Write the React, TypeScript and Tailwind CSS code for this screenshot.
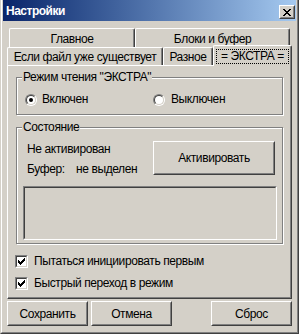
import React from "react";

const px = (pattern: string[]) => {
  const rects: React.ReactElement[] = [];
  pattern.forEach((row, y) =>
    row.split("").forEach((c, x) => {
      if (c === "x") rects.push(<rect key={`${x}-${y}`} x={x} y={y} width={1} height={1} fill="#000" />);
    })
  );
  return rects;
};

const XGlyph = () => (
  <svg width="8" height="7" viewBox="0 0 8 7" shapeRendering="crispEdges">
    {px(["xx....xx", ".xx..xx.", "..xxxx..", "...xx...", "..xxxx..", ".xx..xx.", "xx....xx"])}
  </svg>
);

const Check = () => (
  <svg width="7" height="7" viewBox="0 0 7 7" shapeRendering="crispEdges">
    {px(["......x", ".....xx", "x...xxx", "xx.xxx.", "xxxxx..", ".xxx...", "..x...."])}
  </svg>
);

const Radio = ({ on }: { on?: boolean }) => (
  <div className="w-[12px] h-[12px] rounded-full border border-t-[#808080] border-l-[#808080] border-b-white border-r-white shrink-0">
    <div className="w-full h-full rounded-full border border-t-[#404040] border-l-[#404040] border-b-[#d4d0c8] border-r-[#d4d0c8] bg-white flex items-center justify-center">
      {on && <div className="w-[4px] h-[4px] rounded-full bg-black" />}
    </div>
  </div>
);

const CheckBox = () => (
  <div className="w-[13px] h-[13px] border border-t-[#808080] border-l-[#808080] border-b-white border-r-white shrink-0">
    <div className="w-full h-full border border-t-[#404040] border-l-[#404040] border-b-[#d4d0c8] border-r-[#d4d0c8] bg-white flex items-center justify-center">
      <Check />
    </div>
  </div>
);

const Button = ({ children, className = "" }: { children: React.ReactNode; className?: string }) => (
  <div className={`border border-t-white border-l-white border-b-[#404040] border-r-[#404040] ${className}`}>
    <div className="w-full h-full border border-t-[#d4d0c8] border-l-[#d4d0c8] border-b-[#808080] border-r-[#808080] flex items-center justify-center">
      {children}
    </div>
  </div>
);

const Tab = ({ children, className = "" }: { children: React.ReactNode; className?: string }) => (
  <div
    className={`border-l border-t border-r border-l-white border-t-white border-r-[#404040] rounded-tl-[2px] rounded-tr-[2px] shadow-[inset_-1px_0_0_#808080] flex items-center justify-center bg-[#d4d0c8] ${className}`}
  >
    {children}
  </div>
);

export default function App() {
  return (
    <div className="w-[299px] h-[334px] bg-[#d4d0c8] text-black text-[12px] tracking-[-0.4px] font-['Liberation_Sans',Arial,sans-serif] overflow-hidden">
      <div className="h-full border-l border-r border-b border-l-[#d4d0c8] border-r-[#404040] border-b-[#404040]">
        <div className="h-full border-l border-r border-b border-l-white border-r-[#808080] border-b-[#808080] px-[1px] pb-[1px] flex flex-col">
          {/* Title bar */}
          <div className="h-[21px] shrink-0 bg-gradient-to-r from-[#0a246a] to-[#a6caf0] flex items-start justify-between">
            <div className="mt-[4px] ml-[3px] text-white font-bold text-[12px] tracking-[-0.5px] leading-[15px]">Настройки</div>
            <div className="mt-[5px] mr-[1px] w-[16px] h-[14px] border border-t-white border-l-white border-b-[#404040] border-r-[#404040]">
              <div className="w-full h-full border border-t-[#d4d0c8] border-l-[#d4d0c8] border-b-[#808080] border-r-[#808080] bg-[#d4d0c8] flex items-center justify-center">
                <XGlyph />
              </div>
            </div>
          </div>

          {/* Content */}
          <div className="px-[4px] pt-[7px] flex flex-col">
            {/* Tab row 1 */}
            <div className="flex h-[19px] ml-[2px]">
              <Tab className="w-[126px] h-[20px]">Главное</Tab>
              <Tab className="w-[155px] h-[20px]">Блоки и буфер</Tab>
            </div>
            {/* Tab row 2 */}
            <div className="flex items-end h-[18px] relative z-10">
              <Tab className="w-[156px] h-[18px]">Если файл уже существует</Tab>
              <Tab className="w-[50px] h-[18px]">Разное</Tab>
              <Tab className="w-[79px] h-[21px] mb-[-1px] relative z-20 pt-[1px]">
                <div className="border border-dotted border-black px-[3px] h-[15px] w-[73px] flex items-center justify-center leading-[13px]">= ЭКСТРА =</div>
              </Tab>
            </div>

            {/* Panel */}
            <div className="h-[234px] border border-t-white border-l-white border-r-[#404040] border-b-[#404040] shadow-[inset_-1px_-1px_0_#808080] flex flex-col">
              {/* Group 1 */}
              <div className="relative mt-[11px] ml-[8px] w-[267px] h-[38px] border border-[#808080] shadow-[inset_1px_1px_0_#fff,1px_1px_0_#fff] shrink-0">
                <div className="absolute left-[5px] top-[-8px] bg-[#d4d0c8] px-[1px] leading-[14px]">Режим чтения "ЭКСТРА"</div>
                <div className="flex items-center pt-[15px] pl-[8px] h-[13px] box-content">
                  <Radio on />
                  <span className="ml-[5px] leading-[13px] w-[111px]">Включен</span>
                  <Radio />
                  <span className="ml-[6px] leading-[13px]">Выключен</span>
                </div>
              </div>

              {/* Group 2 */}
              <div className="relative mt-[12px] ml-[8px] w-[267px] h-[117px] border border-[#808080] shadow-[inset_1px_1px_0_#fff,1px_1px_0_#fff] shrink-0">
                <div className="absolute left-[5px] top-[-8px] bg-[#d4d0c8] px-[1px] leading-[14px]">Состояние</div>
                <div className="flex pt-[13px] pl-[10px]">
                  <div className="w-[126px] flex flex-col">
                    <div className="mt-[1px] h-[14px] leading-[14px]">Не активирован</div>
                    <div className="mt-[6px] h-[14px] leading-[14px] flex">
                      <span className="w-[49px]">Буфер:</span>
                      <span>не выделен</span>
                    </div>
                  </div>
                  <Button className="w-[122px] h-[34px]">Активировать</Button>
                </div>
                <div className="mt-[10px] ml-[6px] w-[254px] h-[54px] border border-t-[#808080] border-l-[#808080] border-b-white border-r-white">
                  <div className="w-full h-full border border-t-[#404040] border-l-[#404040] border-b-[#d4d0c8] border-r-[#d4d0c8]" />
                </div>
              </div>

              {/* Checkboxes */}
              <div className="flex items-center mt-[11px] ml-[7px] h-[13px]">
                <CheckBox />
                <span className="ml-[6px] leading-[13px]">Пытаться инициировать первым</span>
              </div>
              <div className="flex items-center mt-[9px] ml-[7px] h-[13px]">
                <CheckBox />
                <span className="ml-[6px] leading-[13px]">Быстрый переход в режим</span>
              </div>
            </div>

            {/* Buttons */}
            <div className="flex mt-[2px] h-[25px]">
              <Button className="w-[81px] h-[25px]">Сохранить</Button>
              <Button className="w-[81px] h-[25px] ml-[3px]">Отмена</Button>
              <Button className="w-[81px] h-[25px] ml-auto">Сброс</Button>
            </div>
          </div>
        </div>
      </div>
    </div>
  );
}
